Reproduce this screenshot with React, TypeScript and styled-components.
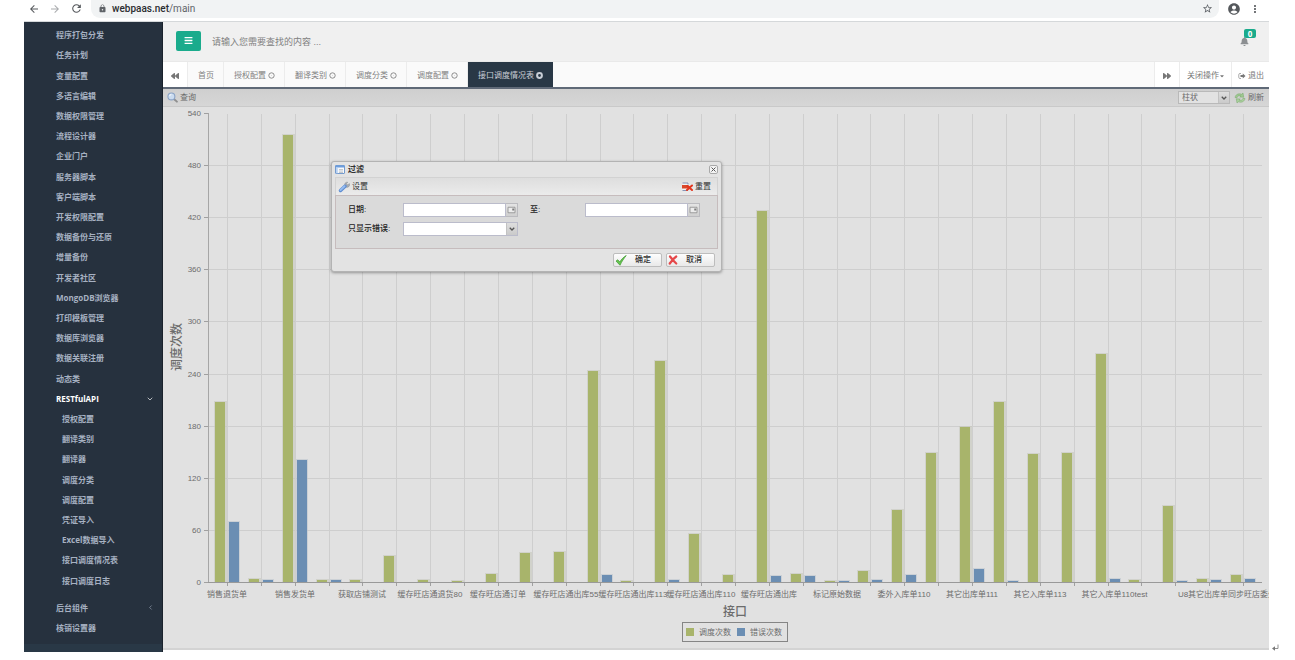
import { useLayoutEffect, useRef, useState } from 'react';
import styled, { createGlobalStyle, css } from 'styled-components';
import {
  MdArrowBack,
  MdArrowForward,
  MdRefresh,
  MdLock,
  MdStarBorder,
  MdAccountCircle,
  MdMoreVert,
} from 'react-icons/md';
import { FaBars, FaBackward, FaForward, FaBell, FaCaretDown } from 'react-icons/fa';
import { ChevronDown, ChevronLeft } from 'lucide-react';

const GlobalStyle = createGlobalStyle`
  * { box-sizing: border-box; }
  body {
    margin: 0;
    background: #fff;
    font-family: "Liberation Sans", "Noto Sans CJK SC", sans-serif;
    font-size: 8px;
    line-height: 12px;
    color: #555;
  }
  button, input, select {
    font: inherit;
    color: inherit;
    margin: 0;
    padding: 0;
    border: 0;
    background: none;
  }
  ul { list-style: none; margin: 0; padding: 0; }
  a { color: inherit; text-decoration: none; }
  svg { display: block; flex: none; }
`;

/* ---------- page frame ---------- */

const Page = styled.div`
  display: flex;
  padding-left: 24px;
`;

const Frame = styled.div`
  flex: 1;
  min-width: 0;
`;

const Margin = styled.div`
  width: 26px;
  display: flex;
  align-items: flex-end;
  padding-left: 2px;
  color: #777;
`;

/* ---------- browser bar ---------- */

const BrowserBar = styled.div`
  display: flex;
  align-items: center;
  height: 22px;
  padding: 0 8px 4px 4px;
  border-bottom: 1px solid #d5d8da;
  color: #55585c;
`;

const NavButton = styled.button<{ $dim?: boolean }>`
  width: 21px;
  display: flex;
  color: ${(p) => (p.$dim ? '#a9abae' : '#55585c')};
`;

const Address = styled.div`
  flex: 1;
  display: flex;
  align-items: center;
  gap: 5px;
  height: 18px;
  padding: 0 6px 0 7px;
  border-radius: 0 0 9px 9px;
  background: #f1f3f4;
  font-family: Roboto, sans-serif;
  font-size: 10px;
  color: #5f6368;
`;

const Url = styled.span`
  flex: 1;
  strong { font-weight: 500; color: #2b2d30; }
`;

const BrowserActions = styled.div`
  display: flex;
  align-items: center;
  gap: 8px;
  padding-left: 8px;
`;

/* ---------- sidebar ---------- */

const Workspace = styled.div`
  display: flex;
`;

const Sidebar = styled.nav`
  width: 139px;
  display: flex;
  flex-direction: column;
  background: #26313e;
  border-right: 1px solid #1a222c;
  color: #a7b1c2;
  font-family: "Open Sans", "Noto Sans CJK SC", sans-serif;
  font-weight: 700;
`;

const Menu = styled.ul`
  flex: 1;
  display: flex;
  flex-direction: column;
  padding: 3px 0 6px;
`;

const SubMenu = styled.ul`
  flex: 9;
  display: flex;
  flex-direction: column;
  margin-bottom: 7px;
  padding-left: 38px;
`;

const MenuItem = styled.li<{ $active?: boolean; $nested?: boolean }>`
  flex: 1;
  display: flex;
  align-items: center;
  justify-content: space-between;
  padding: 0 8px 0 ${(p) => (p.$nested ? '0' : '32px')};
  line-height: 20px;
  ${(p) => p.$active && css`color: #fff;`}
`;

const SidebarFoot = styled.div`
  height: 8px;
  background: #293846;
`;

/* ---------- main column ---------- */

const Main = styled.main`
  flex: 1;
  min-width: 0;
  padding-bottom: 2px;
`;

const Header = styled.header`
  display: flex;
  align-items: center;
  height: 39px;
  padding: 0 12px 2px 13px;
  background: #f0f0f0;
`;

const MenuToggle = styled.button`
  display: flex;
  align-items: center;
  justify-content: center;
  width: 25px;
  height: 20px;
  border-radius: 2px;
  background: #1aab8c;
  color: #fff;
`;

const SearchBox = styled.input`
  flex: 1;
  margin-left: 11px;
  height: 20px;
  padding-top: 2px;
  font-size: 9px;
  outline: none;
  &::placeholder { color: #808080; opacity: 1; }
`;

const Alerts = styled.button`
  position: relative;
  display: flex;
  width: 17px;
  height: 17px;
  margin-bottom: 6px;
  align-items: flex-end;
  color: #8c8f92;
`;

const Badge = styled.span`
  position: absolute;
  top: 0;
  right: 1px;
  width: 12px;
  height: 9px;
  line-height: 9px;
  border-radius: 2px;
  background: #1aab8c;
  color: #fff;
  font-family: "Open Sans", sans-serif;
  font-weight: 700;
  text-align: center;
`;

const TabBar = styled.div`
  display: flex;
  height: 28px;
  border-top: 1px solid #e9e9e9;
  border-bottom: 2px solid #5f6977;
  background: #fafafa;
  color: #828282;
`;

const TabButton = styled.button<{ $active?: boolean; $plain?: boolean }>`
  display: flex;
  align-items: center;
  gap: 2px;
  padding: 2px 9px 0 10px;
  border-right: 1px solid #ececec;
  ${(p) => p.$plain && css`background: #fff; color: #777; padding: 2px 8px 0 8px;`}
  ${(p) => p.$active && css`background: #293846; color: #c9ced6; border-right-color: #293846;`}
`;

const TabTools = styled.div`
  display: flex;
  margin-left: auto;
  border-left: 1px solid #ececec;
  button:last-child { padding: 2px 5px 0 6px; border-right: 0; }
  button:nth-child(2) { padding: 2px 6px 0 7px; gap: 0; }
`;

/* ---------- report panel ---------- */

const Panel = styled.section`
  position: relative;
  background: #e1e1e1;
  border-bottom: 2px solid #d3d3d3;
`;

const Toolbar = styled.div`
  display: flex;
  align-items: center;
  justify-content: space-between;
  height: 18px;
  padding: 0 5px 0 4px;
  border-bottom: 1px solid #c9c9c9;
  background: linear-gradient(#cfcfcf, #d6d6d6);
  color: #6a6a6a;
`;

const ToolButton = styled.button`
  display: flex;
  align-items: center;
  gap: 2px;
`;

const ToolGroup = styled.div`
  display: flex;
  align-items: center;
  gap: 4px;
`;

const Picker = styled.div<{ $grow?: boolean }>`
  display: flex;
  position: relative;
  width: ${(p) => (p.$grow ? '115px' : '52px')};
  height: ${(p) => (p.$grow ? '14px' : '13px')};
  border: 1px solid ${(p) => (p.$grow ? '#bbbccb' : '#b9b9b9')};
  background: ${(p) => (p.$grow ? '#fff' : '#e2e2e2')};
  select {
    appearance: none;
    width: 100%;
    padding: 0 14px 0 3px;
    line-height: 11px;
    outline: none;
  }
`;

const PickerArrow = styled.span`
  position: absolute;
  top: 0;
  right: 0;
  bottom: 0;
  width: 11px;
  display: flex;
  align-items: center;
  justify-content: center;
  background: linear-gradient(#dedede, #cacaca);
  border-left: 1px solid #c2c2c2;
  pointer-events: none;
`;

const ChartBox = styled.div`
  overflow: hidden;
  svg { width: 100%; }
  text { fill: #6c6c6c; font-size: 8px; }
  .title { font-size: 12px; font-weight: 500; }
`;

/* ---------- filter dialog ---------- */

const Dialog = styled.form`
  position: absolute;
  top: 72px;
  left: 168px;
  width: 391px;
  padding: 0 3px;
  border: 1px solid #b3b3b3;
  border-radius: 3px;
  background: #e3e3e3;
  box-shadow: 0 1px 3px rgba(0, 0, 0, 0.35);
  color: #333;
`;

const DialogRow = styled.div<{ $tools?: boolean }>`
  display: flex;
  align-items: center;
  justify-content: space-between;
  height: ${(p) => (p.$tools ? '18px' : '15px')};
  ${(p) =>
    p.$tools &&
    css`
      padding: 0 6px 0 2px;
      border: 1px solid #d2d2d2;
      border-bottom: 0;
      background: linear-gradient(#dedede, #ebebeb);
    `}
`;

const DialogTitle = styled.h2`
  display: flex;
  align-items: center;
  gap: 3px;
  margin: 0;
  font-size: 8px;
  font-weight: 700;
`;

const CloseButton = styled.button`
  display: flex;
  align-items: center;
  justify-content: center;
  width: 9px;
  height: 9px;
  border: 1px solid #a8a8a8;
  border-radius: 2px;
  background: #f3f3f3;
`;

const Fields = styled.div`
  display: grid;
  grid-template-columns: 55px 115px 12px 55px 115px;
  row-gap: 5px;
  align-content: start;
  height: 54px;
  padding: 7px 12px;
  border: 1px solid #c6bcbd;
  background: #dadada;
  label { line-height: 14px; font-weight: 500; color: #222; }
`;

const DateField = styled.div`
  display: flex;
  height: 14px;
  input {
    flex: 1;
    min-width: 0;
    padding: 0 3px;
    border: 1px solid #bbbccb;
    background: #fff;
    outline: none;
  }
  button {
    width: 12px;
    display: flex;
    align-items: center;
    justify-content: center;
    border: 1px solid #bbbbbf;
    border-left: 0;
    background: linear-gradient(#e4e4e4, #cfcfcf);
  }
`;

const DialogFooter = styled.div`
  display: flex;
  justify-content: flex-end;
  gap: 4px;
  padding: 4px 3px;
`;

const DialogButton = styled.button`
  display: flex;
  align-items: center;
  width: 49px;
  height: 14px;
  padding-left: 1px;
  gap: 8px;
  border: 1px solid #bdbdbd;
  border-radius: 2px;
  background: linear-gradient(#fdfdfd, #e9e9e9);
  font-weight: 500;
  color: #333;
`;

/* ---------- icons ---------- */

const RingClose = ({ bold }: { bold?: boolean }) => (
  <svg width="7" height="7" viewBox="0 0 14 14" fill="none" stroke="currentColor">
    <circle cx="7" cy="7" r={bold ? 4.8 : 5.4} strokeWidth={bold ? 4 : 1.8} />
    {!bold && <path d="M5.800 5.800l2.400 2.400M8.200 5.800l-2.400 2.400" strokeWidth="0.500" opacity="0.500" />}
  </svg>
);

const SignOut = () => (
  <svg width="8" height="8" viewBox="0 0 16 16">
    <path d="M6 3H4a2.500 2.500 0 0 0-2.500 2.500v5A2.500 2.500 0 0 0 4 13h2" fill="none" stroke="#888" strokeWidth="1.400" />
    <path d="M9.500 3.200L15 8l-5.500 4.800V10H5V6h4.500z" fill="#777" />
  </svg>
);

const Magnifier = () => (
  <svg width="11" height="11" viewBox="0 0 20 20">
    <path d="M13 13l5 4.500" stroke="#8f8f8f" strokeWidth="3.600" strokeLinecap="round" />
    <circle cx="8" cy="8" r="6.300" fill="#cbdcf0" stroke="#8aa3c6" strokeWidth="2" />
    <path d="M4.500 7.500a4 4 0 0 1 3.500-3.200" stroke="#fff" strokeWidth="1.500" fill="none" />
  </svg>
);

const Recycle = () => (
  <svg width="12" height="12" viewBox="0 0 24 24">
    <path d="M2 11C3 5 9 2 15 4.500L18 2l1.500 8.500-8-.5 2.500-2.200C10 6.500 7 8 6 11.500z" fill="#9dc890" stroke="#77a768" />
    <path d="M22 13c-1 6-7 9-13 6.500L6 22l-1.500-8.500 8 .5-2.500 2.200c4 1.300 7-.2 8-3.700z" fill="#a9cf9d" stroke="#77a768" />
  </svg>
);

const Form = () => (
  <svg width="10" height="9" viewBox="0 0 20 18">
    <rect x="1" y="1" width="18" height="16" rx="1" fill="#f7f9fc" stroke="#5585c4" strokeWidth="1.600" />
    <rect x="1" y="1" width="18" height="4" fill="#6c9ddd" />
    <rect x="2" y="5" width="3.500" height="11.500" fill="#b8d1f1" />
    <path d="M8 9h8M8 12h8M8 15h8" stroke="#b0b5bb" strokeWidth="1.500" />
  </svg>
);

const Wrench = () => (
  <svg width="12" height="12" viewBox="0 0 24 24">
    <path d="M14 10a5 5 0 0 1 5.500-7.500L17 5.500l.8 1.800 2.200.5 2.500-2.600A5 5 0 0 1 15 11.500z" fill="#a9aeb4" stroke="#858a90" />
    <path d="M5 19L14 10.500" stroke="#5d8bd0" strokeWidth="7" strokeLinecap="round" />
    <path d="M5 18L13 10.500" stroke="#94bbf0" strokeWidth="4" strokeLinecap="round" />
  </svg>
);

const ResetMark = () => (
  <svg width="11" height="10" viewBox="0 0 22 20">
    <path d="M1 2h12v15H1z" fill="#f2f2f2" />
    <path d="M1 2h11v3M1 17h11" stroke="#6b7fa8" strokeWidth="1.600" fill="none" />
    <path d="M0 6h13v7H0z" fill="#d9482b" />
    <path d="M11 8l9 8M20 7L10 16" stroke="#e2351d" strokeWidth="4" strokeLinecap="round" />
  </svg>
);

const Calendar = () => (
  <svg width="9" height="8" viewBox="0 0 18 16">
    <path d="M2 2.500h14v11H2z" fill="#ececec" stroke="#8b8b8b" strokeWidth="1.600" />
    <path d="M10.500 5h4v4h-4z" fill="#7b7b7b" />
  </svg>
);

const Chevron = () => (
  <svg width="6" height="4" viewBox="0 0 12 8">
    <path d="M1.500 1.500L6 6l4.500-4.500" fill="none" stroke="#555" strokeWidth="2.600" />
  </svg>
);

const CloseX = () => (
  <svg width="5" height="5" viewBox="0 0 10 10">
    <path d="M1 1l8 8M9 1L1 9" stroke="#555" strokeWidth="2" />
  </svg>
);

const Check = () => (
  <svg width="12" height="11" viewBox="0 0 24 22">
    <path d="M2 12l3.500-2.500 4 4.500C13 8.500 17 4 22.500 1 18 6.500 13.500 13 10 20.500z" fill="#67c552" stroke="#3d9a2e" strokeWidth="1.400" />
  </svg>
);

const Cross = () => (
  <svg width="10" height="10" viewBox="0 0 20 20">
    <path d="M4 3c3 4 8 10 12.500 14M16.500 3C12 6 7 12 3.500 17" stroke="#e5484a" strokeWidth="4.400" strokeLinecap="round" fill="none" />
  </svg>
);

const ReturnMark = () => (
  <svg width="8" height="8" viewBox="0 0 16 16">
    <path d="M14 1v8H4" fill="none" stroke="currentColor" strokeWidth="1.600" />
    <path d="M8 4.500v9L2 9z" fill="currentColor" />
  </svg>
);

/* ---------- chart ---------- */

type Item = { name?: string; runs: number; errors: number };

const ITEMS: Item[] = [
  { name: '销售退货单', runs: 207, errors: 69 },
  { runs: 4, errors: 2 },
  { name: '销售发货单', runs: 515, errors: 141 },
  { runs: 2, errors: 2 },
  { name: '获取店铺测试', runs: 2, errors: 0 },
  { runs: 30, errors: 0 },
  { name: '缓存旺店通退货80', runs: 2, errors: 0 },
  { runs: 1, errors: 0 },
  { name: '缓存旺店通订单', runs: 9, errors: 0 },
  { runs: 33, errors: 0 },
  { name: '缓存旺店通出库55', runs: 35, errors: 0 },
  { runs: 243, errors: 8 },
  { name: '缓存旺店通出库113', runs: 1, errors: 0 },
  { runs: 254, errors: 2 },
  { name: '缓存旺店通出库110', runs: 55, errors: 0 },
  { runs: 8, errors: 0 },
  { name: '缓存旺店通出库', runs: 427, errors: 7 },
  { runs: 9, errors: 7 },
  { name: '标记原始数据', runs: 1, errors: 1 },
  { runs: 13, errors: 2 },
  { name: '委外入库单110', runs: 83, errors: 8 },
  { runs: 148, errors: 0 },
  { name: '其它出库单111', runs: 178, errors: 15 },
  { runs: 207, errors: 1 },
  { name: '其它入库单113', runs: 147, errors: 0 },
  { runs: 149, errors: 0 },
  { name: '其它入库单110', runs: 262, errors: 3 },
  { name: 'test', runs: 2, errors: 0 },
  { runs: 88, errors: 1 },
  { runs: 4, errors: 2 },
  { name: 'U8其它出库单同步旺店委外入库单据', runs: 8, errors: 4 },
];

const GREEN = '#a8b46b';
const BLUE = '#6b8eb3';
const CHART_HEIGHT = 541;
const MAX = 540;
const PLOT = { left: 45, right: 7, top: 6, bottom: 475 };

function Chart() {
  const box = useRef<HTMLDivElement>(null);
  const [width, setWidth] = useState(1106);

  useLayoutEffect(() => {
    const node = box.current;
    if (!node) return;
    const measure = () => setWidth(node.clientWidth);
    measure();
    const observer = new ResizeObserver(measure);
    observer.observe(node);
    return () => observer.disconnect();
  }, []);

  const right = width - PLOT.right;
  const inset = 19;
  const step = (right - PLOT.left - inset * 2) / (ITEMS.length - 1);
  const scale = (PLOT.bottom - PLOT.top) / MAX;
  const xOf = (i: number) => Math.round(PLOT.left + inset + step * i);
  const yOf = (v: number) => Math.round(PLOT.bottom - v * scale);
  const centre = Math.round((PLOT.left + right) / 2);
  const ticks = Array.from({ length: 10 }, (_, i) => i * 60);

  return (
    <ChartBox ref={box}>
      <svg height={CHART_HEIGHT} role="img" aria-label="接口调度情况表">
        {ticks.map((t) => (
          <g key={t}>
            {t > 0 && t < MAX && (
              <line x1={PLOT.left} x2={right} y1={yOf(t) + 0.5} y2={yOf(t) + 0.5} stroke="#cecece" />
            )}
            <line x1={PLOT.left - 4} x2={PLOT.left} y1={yOf(t) + 0.5} y2={yOf(t) + 0.5} stroke="#a0a0a0" />
            <text x={PLOT.left - 7} y={yOf(t) + 3} textAnchor="end">{t}</text>
          </g>
        ))}
        {ITEMS.map((item, i) => {
          const x = xOf(i);
          return (
            <g key={i}>
              <line x1={x + 0.5} x2={x + 0.5} y1={PLOT.top + 1} y2={PLOT.bottom} stroke="#cecece" />
              <line x1={x + 0.5} x2={x + 0.5} y1={PLOT.bottom} y2={PLOT.bottom + 4} stroke="#a0a0a0" />
              {item.runs > 0 && (
                <>
                  <rect x={x - 13} y={yOf(item.runs) - 1} width="13" height={PLOT.bottom - yOf(item.runs) + 1} fill="#c6c8bd" opacity="0.6" />
                  <rect x={x - 12} y={yOf(item.runs)} width="10" height={PLOT.bottom - yOf(item.runs)} fill={GREEN} />
                </>
              )}
              {item.errors > 0 && (
                <>
                  <rect x={x + 1} y={yOf(item.errors) - 1} width="12" height={PLOT.bottom - yOf(item.errors) + 1} fill="#bcc4cd" opacity="0.6" />
                  <rect x={x + 2} y={yOf(item.errors)} width="10" height={PLOT.bottom - yOf(item.errors)} fill={BLUE} />
                </>
              )}
              {item.name && (
                <text x={x} y={PLOT.bottom + 15} textAnchor="middle">{item.name}</text>
              )}
            </g>
          );
        })}
        <line x1={PLOT.left + 0.5} x2={PLOT.left + 0.5} y1={PLOT.top} y2={PLOT.bottom} stroke="#a6a6a6" />
        <line x1={PLOT.left} x2={right} y1={PLOT.bottom + 0.5} y2={PLOT.bottom + 0.5} stroke="#999" />
        <text className="title" transform="translate(18 240) rotate(-90)" textAnchor="middle">调度次数</text>
        <text className="title" x={centre} y={509} textAnchor="middle">接口</text>
        <g transform={`translate(${centre - 53} 515)`}>
          <rect x="0.5" y="0.5" width="105" height="19" fill="none" stroke="#858585" />
          <rect x="4" y="6" width="8" height="8" fill={GREEN} />
          <text x="17" y="13">调度次数</text>
          <rect x="55" y="6" width="8" height="8" fill={BLUE} />
          <text x="68" y="13">错误次数</text>
        </g>
      </svg>
    </ChartBox>
  );
}

/* ---------- data ---------- */

const MENU = [
  '程序打包分发', '任务计划', '变量配置', '多语言编辑', '数据权限管理', '流程设计器',
  '企业门户', '服务器脚本', '客户端脚本', '开发权限配置', '数据备份与还原', '增量备份',
  '开发者社区', 'MongoDB浏览器', '打印模板管理', '数据库浏览器', '数据关联注册', '动态类',
];

const API_MENU = [
  '授权配置', '翻译类别', '翻译器', '调度分类', '调度配置',
  '凭证导入', 'Excel数据导入', '接口调度情况表', '接口调度日志',
];

const TABS = ['授权配置', '翻译类别', '调度分类', '调度配置', '接口调度情况表'];

function DateInput({ id }: { id: string }) {
  return (
    <DateField>
      <input id={id} type="text" />
      <button type="button" aria-label="选择日期"><Calendar /></button>
    </DateField>
  );
}

export default function App() {
  return (
    <Page>
      <GlobalStyle />
      <Frame>
        <BrowserBar>
          <NavButton aria-label="后退"><MdArrowBack size={12} /></NavButton>
          <NavButton $dim aria-label="前进"><MdArrowForward size={12} /></NavButton>
          <NavButton aria-label="刷新页面"><MdRefresh size={13} /></NavButton>
          <Address>
            <MdLock size={9} />
            <Url><strong>webpaas.net</strong>/main</Url>
            <MdStarBorder size={11} />
          </Address>
          <BrowserActions>
            <MdAccountCircle size={14} />
            <MdMoreVert size={12} />
          </BrowserActions>
        </BrowserBar>
        <Workspace>
          <Sidebar>
            <Menu>
              {MENU.map((name) => (
                <MenuItem key={name}><a href="#">{name}</a></MenuItem>
              ))}
              <MenuItem $active><a href="#">RESTfulAPI</a><ChevronDown size={8} /></MenuItem>
              <SubMenu>
                {API_MENU.map((name) => (
                  <MenuItem key={name} $nested><a href="#">{name}</a></MenuItem>
                ))}
              </SubMenu>
              <MenuItem><a href="#">后台组件</a><ChevronLeft size={7} /></MenuItem>
              <MenuItem><a href="#">核销设置器</a></MenuItem>
            </Menu>
            <SidebarFoot />
          </Sidebar>
          <Main>
            <Header>
              <MenuToggle aria-label="菜单"><FaBars size={9} /></MenuToggle>
              <SearchBox aria-label="搜索" placeholder="请输入您需要查找的内容 ..." />
              <Alerts aria-label="通知">
                <FaBell size={9} />
                <Badge>0</Badge>
              </Alerts>
            </Header>
            <TabBar>
              <TabButton $plain aria-label="向左"><FaBackward size={8} /></TabButton>
              <TabButton>首页</TabButton>
              {TABS.map((name, i) => {
                const active = i === TABS.length - 1;
                return (
                  <TabButton key={name} $active={active}>
                    {name}
                    <RingClose bold={active} />
                  </TabButton>
                );
              })}
              <TabTools>
                <TabButton $plain aria-label="向右"><FaForward size={8} /></TabButton>
                <TabButton $plain>关闭操作<FaCaretDown size={6} /></TabButton>
                <TabButton $plain><SignOut />退出</TabButton>
              </TabTools>
            </TabBar>
            <Panel>
              <Toolbar>
                <ToolButton><Magnifier />查询</ToolButton>
                <ToolGroup>
                  <Picker>
                    <select aria-label="图表类型"><option>柱状</option></select>
                    <PickerArrow><Chevron /></PickerArrow>
                  </Picker>
                  <ToolButton><Recycle />刷新</ToolButton>
                </ToolGroup>
              </Toolbar>
              <Chart />
              <Dialog role="dialog" aria-label="过滤">
                <DialogRow>
                  <DialogTitle><Form />过滤</DialogTitle>
                  <CloseButton type="button" aria-label="关闭"><CloseX /></CloseButton>
                </DialogRow>
                <DialogRow $tools>
                  <ToolButton type="button"><Wrench />设置</ToolButton>
                  <ToolButton type="button"><ResetMark />重置</ToolButton>
                </DialogRow>
                <Fields>
                  <label htmlFor="from">日期:</label>
                  <DateInput id="from" />
                  <span />
                  <label htmlFor="to">至:</label>
                  <DateInput id="to" />
                  <label htmlFor="only-errors">只显示错误:</label>
                  <Picker $grow>
                    <select id="only-errors" defaultValue=""><option value="" /></select>
                    <PickerArrow><Chevron /></PickerArrow>
                  </Picker>
                </Fields>
                <DialogFooter>
                  <DialogButton type="button"><Check />确定</DialogButton>
                  <DialogButton type="button"><Cross />取消</DialogButton>
                </DialogFooter>
              </Dialog>
            </Panel>
          </Main>
        </Workspace>
      </Frame>
      <Margin><ReturnMark /></Margin>
    </Page>
  );
}
